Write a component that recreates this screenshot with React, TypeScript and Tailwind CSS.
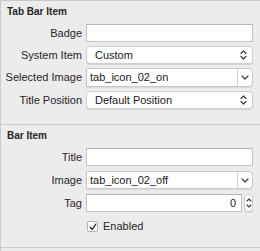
import React from "react";

const UpDown = () => (
  <svg width="7" height="10" viewBox="0 0 7 10" fill="none" stroke="#3a3a3a" strokeWidth="1.2" strokeLinecap="round" strokeLinejoin="round">
    <path d="M1 3.5 L3.5 1 L6 3.5" />
    <path d="M1 6.5 L3.5 9 L6 6.5" />
  </svg>
);

const Down = () => (
  <svg width="8" height="5" viewBox="0 0 8 5" fill="none" stroke="#3a3a3a" strokeWidth="1.2" strokeLinecap="round" strokeLinejoin="round">
    <path d="M1 1 L4 4 L7 1" />
  </svg>
);

const Label = ({ children }: { children: React.ReactNode }) => (
  <div className="w-[81px] shrink-0 text-right pr-[0px] text-[11px] leading-[13px] text-[#262626]">{children}</div>
);

const TextField = ({ h = 18, children }: { h?: number; children?: React.ReactNode }) => (
  <div
    className="ml-[4px] w-[167px] bg-white border border-[#c4c4c4] border-t-[#b5b5b5] flex items-center justify-end pr-[5px] text-[11px] text-[#1a1a1a]"
    style={{ height: h }}
  >
    {children}
  </div>
);

const Popup = ({ text }: { text: string }) => (
  <div className="ml-[4px] w-[167px] h-[18px] bg-white rounded-[4px] border border-[#cfcfcf] shadow-[0_1px_1px_rgba(0,0,0,0.12)] flex items-center pl-[8px] pr-[5px]">
    <span className="flex-1 text-[11px] leading-[13px] text-[#1a1a1a]">{text}</span>
    <UpDown />
  </div>
);

const Combo = ({ text, h = 19 }: { text: string; h?: number }) => (
  <div
    className="ml-[4px] w-[167px] bg-white rounded-r-[4px] border border-[#c8c8c8] shadow-[0_1px_1px_rgba(0,0,0,0.08)] flex items-stretch"
    style={{ height: h }}
  >
    <span className="flex-1 flex items-center pl-[3px] text-[11px] leading-[13px] text-[#1a1a1a]">{text}</span>
    <div className="w-[15px] border-l border-[#d2d2d2] flex items-center justify-center">
      <Down />
    </div>
  </div>
);

export default function App() {
  return (
    <div
      className="w-[260px] h-[251px] bg-[#ececec] border-l border-t border-[#c9c9c9] overflow-hidden"
      style={{ fontFamily: '"Liberation Sans", Arial, sans-serif' }}
    >
      <div className="h-[124px] border-b border-[#c9c9c9] flex flex-col">
        <div className="h-[23px] pt-[5px] pl-[6px] text-[10px] leading-[12px] font-bold text-[#262626]">Tab Bar Item</div>
        <div className="flex flex-col gap-[4px]">
          <div className="flex items-center">
            <Label>Badge</Label>
            <TextField />
          </div>
          <div className="flex items-center">
            <Label>System Item</Label>
            <Popup text="Custom" />
          </div>
          <div className="flex items-center">
            <Label>Selected Image</Label>
            <Combo text="tab_icon_02_on" />
          </div>
          <div className="flex items-center">
            <Label>Title Position</Label>
            <Popup text="Default Position" />
          </div>
        </div>
      </div>
      <div className="h-[123px] border-b border-[#c9c9c9] flex flex-col">
        <div className="h-[23px] pt-[5px] pl-[6px] text-[10px] leading-[12px] font-bold text-[#262626]">Bar Item</div>
        <div className="flex flex-col gap-[5px]">
          <div className="flex items-center">
            <Label>Title</Label>
            <TextField />
          </div>
          <div className="flex items-center">
            <Label>Image</Label>
            <Combo text="tab_icon_02_off" h={18} />
          </div>
          <div className="flex items-center">
            <Label>Tag</Label>
            <div className="ml-[4px] flex items-center">
              <div className="w-[156px] h-[18px] bg-white border border-[#c4c4c4] border-t-[#b5b5b5] flex items-center justify-end pr-[5px] text-[11px] text-[#1a1a1a]">0</div>
              <div className="ml-[2px] w-[9px] h-[18px] bg-white rounded-[4px] border border-[#cfcfcf] shadow-[0_1px_1px_rgba(0,0,0,0.1)] flex items-center justify-center">
                <svg width="6" height="12" viewBox="0 0 6 12" fill="none" stroke="#3a3a3a" strokeWidth="1.1" strokeLinecap="round" strokeLinejoin="round">
                  <path d="M1 4 L3 2 L5 4" />
                  <path d="M1 8 L3 10 L5 8" />
                </svg>
              </div>
            </div>
          </div>
          <div className="flex items-center pl-[86px] mt-[3px]">
            <div className="w-[11px] h-[11px] bg-white rounded-[2px] border border-[#b3b3b3] flex items-center justify-center">
              <svg width="8" height="8" viewBox="0 0 8 8" fill="none" stroke="#2a2a2a" strokeWidth="1.3" strokeLinecap="round" strokeLinejoin="round">
                <path d="M1.2 4.2 L3.2 6.5 L6.8 1.2" />
              </svg>
            </div>
            <span className="ml-[5px] text-[11px] leading-[13px] text-[#262626]">Enabled</span>
          </div>
        </div>
      </div>
    </div>
  );
}
